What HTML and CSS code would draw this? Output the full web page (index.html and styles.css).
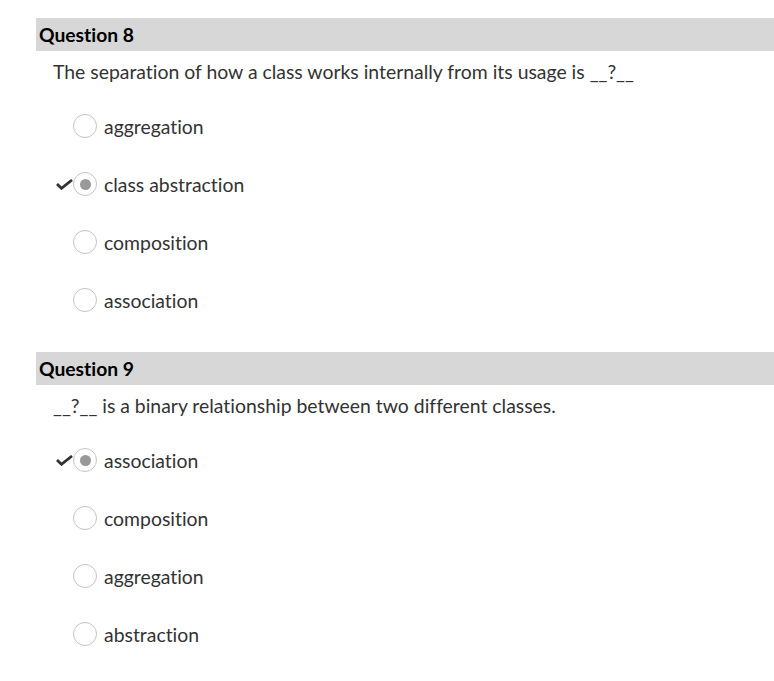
FILE: index.html
```html
<!DOCTYPE html>
<html>
<head>
<meta charset="utf-8">
<link rel="stylesheet" href="styles.css">
</head>
<body>
<div class="quiz">
  <section class="question">
    <div class="q-header">Question 8</div>
    <div class="q-text">The separation of how a class works internally from its usage is __?__</div>
    <ul class="answers">
      <li class="answer"><span class="mark"></span><span class="radio"></span><span class="label">aggregation</span></li>
      <li class="answer"><span class="mark"><svg width="17" height="11" viewBox="0 0 17 11"><path d="M1 5 L5.5 9.3 L16 1" fill="none" stroke="#333" stroke-width="2.8"/></svg></span><span class="radio checked"></span><span class="label">class abstraction</span></li>
      <li class="answer"><span class="mark"></span><span class="radio"></span><span class="label">composition</span></li>
      <li class="answer"><span class="mark"></span><span class="radio"></span><span class="label">association</span></li>
    </ul>
  </section>
  <section class="question">
    <div class="q-header">Question 9</div>
    <div class="q-text">__?__ is a binary relationship between two different classes.</div>
    <ul class="answers">
      <li class="answer"><span class="mark"><svg width="17" height="11" viewBox="0 0 17 11"><path d="M1 5 L5.5 9.3 L16 1" fill="none" stroke="#333" stroke-width="2.8"/></svg></span><span class="radio checked"></span><span class="label">association</span></li>
      <li class="answer"><span class="mark"></span><span class="radio"></span><span class="label">composition</span></li>
      <li class="answer"><span class="mark"></span><span class="radio"></span><span class="label">aggregation</span></li>
      <li class="answer"><span class="mark"></span><span class="radio"></span><span class="label">abstraction</span></li>
    </ul>
  </section>
</div>
</body>
</html>
```
FILE: styles.css
```css
html, body {
  margin: 0;
  padding: 0;
  background: #fff;
}
body {
  font-family: Lato, "Open Sans", sans-serif;
  color: #333;
  font-variant-ligatures: none;
}
.quiz {
  padding: 18px 0 0 36px;
}
.question {
  margin-bottom: 23px;
}
.q-header {
  background: #d7d7d7;
  height: 33px;
  line-height: 33px;
  padding-left: 3px;
  font-weight: 700;
  font-size: 19.3px;
  color: #000;
}
.q-text {
  padding-left: 17px;
  margin-top: 8px;
  height: 26px;
  line-height: 26px;
  font-size: 19.4px;
  color: #333;
}
.answers {
  list-style: none;
  margin: 0;
  padding: 0;
  margin-top: 12px;
}
.answer {
  display: flex;
  align-items: center;
  height: 58px;
  font-size: 19.4px;
}
.mark {
  width: 37px;
  display: flex;
  justify-content: flex-end;
  padding-left: 18px;
  box-sizing: border-box;
}
.mark svg {
  display: block;
  margin-top: 1px;
}
.radio {
  width: 24px;
  height: 24px;
  border: 1px solid #c4c4c4;
  border-radius: 50%;
  background: #fff;
  box-sizing: border-box;
  display: flex;
  align-items: center;
  justify-content: center;
  flex: none;
}
.radio.checked::after {
  content: "";
  width: 11px;
  height: 11px;
  border-radius: 50%;
  background: #999;
}
.label {
  margin-left: 7px;
  color: #333;
}
```
